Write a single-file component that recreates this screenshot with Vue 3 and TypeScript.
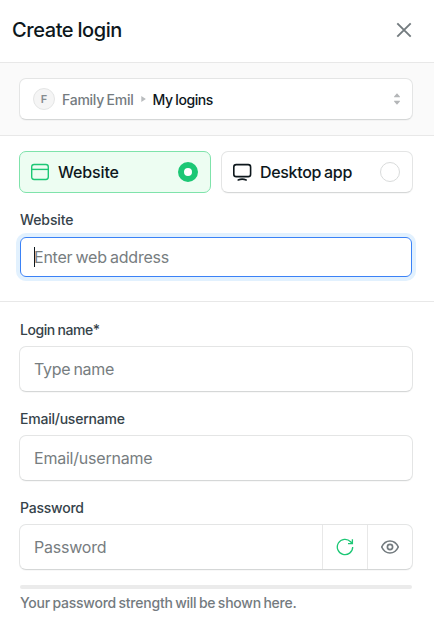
<script setup lang="ts">
import { ref } from 'vue'

type LoginKind = 'website' | 'desktop'

const kind = ref<LoginKind>('website')
const address = ref('')
const loginName = ref('')
const username = ref('')
const password = ref('')
const revealed = ref(false)

function generatePassword(): void {
  const alphabet = 'abcdefghijkmnpqrstuvwxyzABCDEFGHJKLMNPQRSTUVWXYZ23456789'
  const bytes = crypto.getRandomValues(new Uint8Array(16))
  password.value = Array.from(bytes, (b) => alphabet[b % alphabet.length]).join('')
}
</script>

<template>
  <main class="panel">
    <header class="header">
      <h1 class="title">Create login</h1>
      <button class="close" type="button" aria-label="Close">
        <svg width="16" height="16" viewBox="0 0 16 16" fill="none" stroke="currentColor" stroke-width="1.9">
          <path d="M1.3 1.3 14.7 14.7M14.7 1.3 1.3 14.7" />
        </svg>
      </button>
    </header>

    <section class="location">
      <button class="box picker" type="button">
        <span class="avatar">F</span>
        <span class="group">Family Emil</span>
        <svg class="arrow" width="5" height="6" viewBox="0 0 5 6" fill="currentColor"><path d="M.3 0 4.9 3 .3 6Z" /></svg>
        <span class="folder">My logins</span>
        <svg class="sort" width="6" height="12" viewBox="0 0 6 12" fill="currentColor">
          <path d="M3 .2 5.9 3.4V4.2H.1V3.4ZM3 11.8 5.9 8.6V7.8H.1V8.6Z" />
        </svg>
      </button>
    </section>

    <section class="target">
      <div class="kinds">
        <button class="box kind" :class="{ selected: kind === 'website' }" type="button" @click="kind = 'website'">
          <svg width="20" height="20" viewBox="0 0 20 20" fill="none" stroke="currentColor" stroke-width="1.4">
            <rect x="1.7" y="2.5" width="16.6" height="15" rx="2.4" /><path d="M1.7 7.4H18.3" />
          </svg>
          <span class="kind-name web">Website</span>
          <span class="radio" />
        </button>
        <button class="box kind" :class="{ selected: kind === 'desktop' }" type="button" @click="kind = 'desktop'">
          <svg width="20" height="20" viewBox="0 0 20 20" fill="none" stroke="currentColor" stroke-width="1.6" stroke-linecap="round">
            <rect x="1.8" y="2.6" width="16.8" height="12" rx="2.4" /><path d="M6.2 17.9Q10.2 16.3 14.2 17.9" />
          </svg>
          <span class="kind-name desk">Desktop app</span>
          <span class="radio" />
        </button>
      </div>
      <label class="label l-website" for="address">Website</label>
      <div class="field focused">
        <span class="caret" />
        <input id="address" v-model="address" class="input p-address" placeholder="Enter web address" />
      </div>
    </section>

    <section class="details">
      <label class="label l-login" for="login-name">Login name*</label>
      <div class="box field">
        <input id="login-name" v-model="loginName" class="input p-name" placeholder="Type name" />
      </div>

      <label class="label l-email" for="username">Email/username</label>
      <div class="box field">
        <input id="username" v-model="username" class="input p-email" placeholder="Email/username" />
      </div>

      <label class="label l-password" for="password">Password</label>
      <div class="box field">
        <input id="password" v-model="password" class="input p-password" :type="revealed ? 'text' : 'password'" placeholder="Password" />
        <button class="action generate" type="button" aria-label="Generate password" @click="generatePassword">
          <svg width="18" height="18" viewBox="0 0 18 18" fill="none" stroke="currentColor" stroke-width="1.3">
            <path d="M16.7 9A7.7 7.7 0 1 1 14.6 3.7L16.3 5.5M16.4 1.2V5.6H12" />
          </svg>
        </button>
        <button class="action" type="button" aria-label="Show password" @click="revealed = !revealed">
          <svg width="20" height="16" viewBox="0 0 20 16" fill="none" stroke="currentColor" stroke-width="1.7">
            <path d="M1.7 8C3.5 4.2 6.3 2 10 2S16.5 4.2 18.3 8C16.5 11.8 13.7 14 10 14S3.5 11.8 1.7 8Z" stroke-linejoin="round" />
            <circle cx="10" cy="8" r="2.6" />
          </svg>
        </button>
      </div>
      <div class="meter" />
      <p class="hint">Your password strength will be shown here.</p>
    </section>
  </main>
</template>

<style>
body {
  background: #fff;
}
</style>

<style scoped>
.panel {
  width: 434px;
  height: 626px;
  overflow: hidden;
  background: #fff;
  color: #0d171c;
  font-family: Inter, "Liberation Sans", sans-serif;
}
.panel * {
  box-sizing: border-box;
}
button {
  margin: 0;
  padding: 0;
  border: 0;
  background: none;
  color: inherit;
  font: inherit;
  cursor: pointer;
}
svg {
  display: block;
  flex: none;
}
.header {
  display: flex;
  align-items: center;
  justify-content: space-between;
  height: 63px;
  padding: 0 22px 3px 12px;
  border-bottom: 1px solid #e8e8e8;
}
.title {
  margin: 0;
  font-size: 20px;
  line-height: 28px;
  font-weight: 450;
  letter-spacing: -0.42px;
  word-spacing: -0.6px;
}
.close {
  color: #737b7f;
}
.box {
  background: #fff;
  border: 1px solid #e4e5e5;
  border-bottom-color: #d5d7d7;
  border-radius: 7px;
  box-shadow: 0 1px 1px rgba(0, 0, 0, 0.03);
}
.location {
  height: 73px;
  padding: 15px 21px 0 19px;
  background: #fafafa;
  border-bottom: 1px solid #e8e8e8;
}
.picker {
  display: flex;
  align-items: center;
  width: 100%;
  height: 42px;
  padding: 0 12px 0 13px;
  font-size: 14px;
  font-weight: 450;
}
.avatar {
  display: flex;
  align-items: center;
  justify-content: center;
  width: 22px;
  height: 22px;
  margin-right: 7px;
  border: 1px solid #e4e5e5;
  border-radius: 50%;
  background: #f5f5f5;
  color: #858c8f;
  font-size: 11px;
  font-weight: 600;
}
.group {
  color: #747b7f;
  letter-spacing: -0.25px;
  word-spacing: -1px;
}
.folder {
  letter-spacing: -0.42px;
  word-spacing: -0.5px;
}
.arrow {
  margin: 0 6px 0 8px;
  color: #b9bcbe;
}
.sort {
  margin-left: auto;
  color: #b4b6b8;
}
.target {
  height: 166px;
  padding: 15px 21px 0 19px;
  border-bottom: 1px solid #e8e8e8;
}
.kinds {
  display: grid;
  grid-template-columns: 1fr 1fr;
  gap: 10px;
}
.kind {
  display: flex;
  align-items: center;
  height: 42px;
  padding: 0 12px 0 10px;
  font-size: 16px;
  font-weight: 450;
}
.kind-name {
  margin-left: 8px;
}
.web {
  letter-spacing: -0.15px;
}
.desk {
  letter-spacing: -0.32px;
  word-spacing: -1px;
}
.kind.selected {
  background: #edfdf2;
  border-color: #7fe3ab;
  box-shadow: none;
}
.kind.selected svg {
  color: #1cc775;
}
.radio {
  width: 20px;
  height: 20px;
  margin-left: auto;
  border: 1px solid #d9dbdb;
  border-radius: 50%;
  background: #fff;
}
.selected .radio {
  border: 6px solid #1cc775;
}
.label {
  display: block;
  width: max-content;
  margin-left: 1px;
  color: #36434a;
  font-size: 14px;
  line-height: 20px;
  font-weight: 450;
}
.l-website {
  margin-top: 17px;
  letter-spacing: -0.1px;
}
.l-login {
  letter-spacing: -0.43px;
  word-spacing: -0.6px;
}
.l-email,
.l-password {
  letter-spacing: -0.23px;
}
.field {
  display: flex;
  height: 46px;
  margin-top: 6px;
  overflow: hidden;
}
.field.focused {
  position: relative;
  height: 40px;
  margin: 7px 1px 0;
  overflow: visible;
  border: 1px solid #3b82f6;
  border-radius: 6px;
  box-shadow: 0 0 0 4px #e2f1fe;
}
.caret {
  position: absolute;
  left: 13px;
  top: 9px;
  width: 1px;
  height: 20px;
  background: #0d171c;
}
.input {
  flex: 1;
  min-width: 0;
  padding: 0 14px;
  border: 0;
  outline: 0;
  background: transparent;
  color: #0d171c;
  font-family: inherit;
  font-size: 16px;
}
.focused .input {
  padding: 0 13px;
}
.p-address {
  letter-spacing: -0.24px;
  word-spacing: -1px;
}
.p-name {
  letter-spacing: -0.3px;
  word-spacing: -1px;
}
.p-email,
.p-password {
  letter-spacing: -0.22px;
}
.input::placeholder {
  color: #777d7f;
  opacity: 1;
}
.details {
  padding: 18px 21px 0 19px;
}
.field + .label {
  margin-top: 17px;
}
.action {
  display: flex;
  align-items: center;
  justify-content: center;
  width: 45px;
  border-left: 1px solid #e8e8e8;
  color: #737b7f;
}
.generate {
  color: #1cc775;
}
.meter {
  height: 4px;
  margin: 15px 1px 0;
  border-radius: 2px;
  background: #ebebeb;
}
.hint {
  width: max-content;
  margin: 4px 0 0 1px;
  color: #747b7f;
  font-size: 14px;
  line-height: 20px;
  font-weight: 450;
  letter-spacing: -0.23px;
  word-spacing: -1px;
}
</style>
